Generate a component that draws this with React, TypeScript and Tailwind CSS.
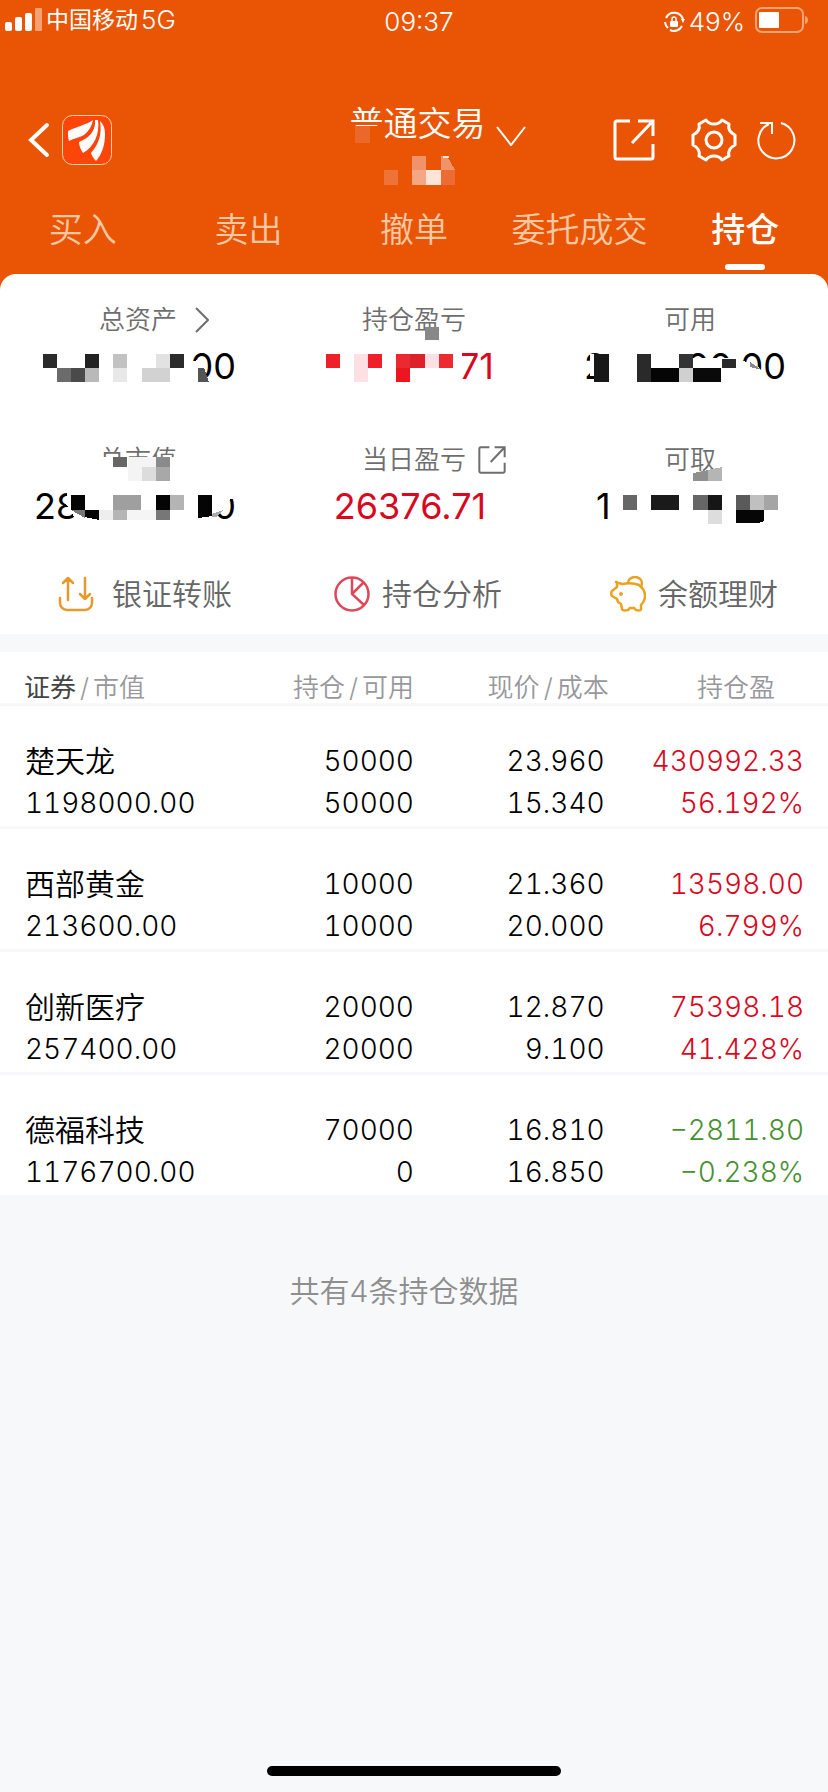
import clsx from "clsx";
import type { ReactNode } from "react";

type Block = { points: string; color: string };

const rect = (x: number, y: number, w: number, h: number, color: string): Block => ({
  points: `${x},${y} ${x + w},${y} ${x + w},${y + h} ${x},${y + h}`,
  color,
});

const poly = (points: string, color: string): Block => ({ points, color });

type Stat = {
  label: string;
  labelClass?: string;
  icon?: ReactNode;
  parts: string[];
  valueClass: string;
  blocks: Block[];
};

const ExportIcon = ({ className, width }: { className: string; width: number }) => (
  <svg viewBox="0 0 42 42" className={className} fill="none" stroke="currentColor" strokeWidth={width}>
    <path d="M17 2H4a2 2 0 0 0-2 2v34a2 2 0 0 0 2 2h34a2 2 0 0 0 2-2V25M25 2h15v15M39 3 19 24" />
  </svg>
);

const STATS: Stat[] = [
  {
    label: "总资产",
    labelClass: "pl-8 gap-[18px]",
    icon: (
      <svg viewBox="0 0 14 26" className="w-[14px] h-[26px]" fill="none" stroke="currentColor" strokeWidth="2">
        <path d="m1 1 12 12L1 25" />
      </svg>
    ),
    parts: ["00"],
    valueClass: "justify-end pr-10",
    blocks: [
      poly("188,64 198,62 204,70 209,84 209,88 188,88", "#fff"),
      poly("198,70 204,70 209,84 198,84", "#555"),
      rect(43, 56, 14, 14, "#2b2b2b"),
      rect(85, 56, 14, 14, "#222"),
      rect(57, 70, 14, 14, "#6b6b6b"),
      rect(71, 70, 14, 14, "#4a4a4a"),
      rect(85, 70, 14, 14, "#b9b9b9"),
      rect(113, 56, 14, 14, "#c2c2c2"),
      rect(113, 70, 14, 14, "#e8e8e8"),
      rect(142, 70, 28, 14, "#d2d2d2"),
      rect(156, 56, 14, 14, "#e2e2e2"),
      rect(170, 56, 14, 14, "#2b2b2b"),
    ],
  },
  {
    label: "持仓盈亏",
    parts: ["71"],
    valueClass: "justify-end pr-[58px] text-[#d8081f]",
    blocks: [
      rect(149, 29, 14, 13, "#888"),
      poly("176,52 186,52 186,72 183,88 176,88", "#fff"),
      rect(50, 56, 14, 14, "#f0202b"),
      rect(78, 56, 14, 28, "#fde0e4"),
      rect(92, 56, 14, 14, "#f0202b"),
      rect(120, 56, 14, 14, "#ec2831"),
      rect(134, 56, 15, 14, "#dd2029"),
      rect(120, 70, 14, 14, "#ee1420"),
      rect(149, 56, 14, 14, "#fde0e4"),
      rect(163, 56, 14, 14, "#ee2a30"),
    ],
  },
  {
    label: "可用",
    parts: ["2", "00.00"],
    valueClass: "justify-between pl-8 pr-[42px]",
    blocks: [
      rect(38, 56, 8, 22, "#fff"),
      rect(130, 60, 56, 28, "#fff"),
      rect(180, 70, 9, 18, "#fff"),
      poly("186,63 200,64 211,73 211,88 186,88", "#fff"),
      poly("198,64 210,72 198,69", "#888"),
      rect(42, 56, 15, 28, "#181818"),
      rect(85, 56, 14, 28, "#2a2a2a"),
      rect(99, 70, 28, 14, "#050505"),
      rect(127, 56, 14, 14, "#333"),
      rect(127, 70, 14, 14, "#d0d0d0"),
      rect(141, 70, 28, 14, "#0a0a0a"),
      rect(170, 61, 14, 9, "#2a2a2a"),
    ],
  },
  {
    label: "总市值",
    parts: ["28", "0"],
    valueClass: "justify-between pl-[34px] pr-10",
    blocks: [
      rect(96, 19, 82, 20, "#fff"),
      rect(113, 19, 14, 10, "#666"),
      rect(128, 19, 28, 10, "#f4f4f4"),
      rect(128, 29, 14, 14, "#f4f4f4"),
      rect(142, 29, 14, 14, "#dcdcdc"),
      rect(156, 19, 14, 10, "#8a8a8a"),
      rect(156, 29, 14, 14, "#a8a8a8"),
      poly("67,50 90,50 90,84 76,84 71,72 66,66", "#fff"),
      poly("208,48 238,48 234,60 229,62 228,72 220,75 208,84", "#fff"),
      rect(71, 57, 14, 15, "#050505"),
      poly("71,72 85,72 85,80", "#777"),
      poly("85,72 99,72 99,82 85,79", "#050505"),
      rect(99, 72, 14, 10, "#eee"),
      rect(113, 57, 28, 15, "#9f9f9f"),
      rect(113, 72, 14, 10, "#b5b5b5"),
      rect(127, 72, 29, 10, "#f5f5f5"),
      rect(156, 57, 14, 15, "#050505"),
      rect(156, 72, 14, 10, "#777"),
      rect(170, 57, 14, 15, "#b4b4b4"),
      poly("198,57 212,57 212,78 198,80", "#050505"),
      poly("212,76 223,72 217,79 212,79", "#aaa"),
    ],
  },
  {
    label: "当日盈亏",
    labelClass: "pl-10 gap-3",
    icon: <ExportIcon className="size-7" width={3} />,
    parts: ["26376.71"],
    valueClass: "justify-center pr-2 text-[#d8081f]",
    blocks: [],
  },
  {
    label: "可取",
    parts: ["1"],
    valueClass: "pl-[44px]",
    blocks: [
      poly("141,35 156,32 156,43 141,43", "#8f8f8f"),
      poly("156,32 170,29 170,43 156,43", "#b5b5b5"),
      rect(71, 57, 14, 15, "#666"),
      rect(99, 57, 28, 15, "#1a1a1a"),
      rect(141, 57, 15, 15, "#666"),
      rect(156, 57, 14, 15, "#161616"),
      rect(156, 72, 14, 14, "#ddd"),
      rect(184, 57, 14, 15, "#5a5a5a"),
      rect(198, 57, 14, 15, "#c0c0c0"),
      rect(212, 57, 14, 15, "#a5a5a5"),
      poly("184,72 212,72 212,83 206,85 184,85", "#060606"),
    ],
  },
];

const TITLE_BLOCKS: Block[] = [
  rect(5, 25, 25, 15, "#e95504"),
  rect(5, 25, 15, 17, "#ec682a"),
  rect(34, 69, 14, 15, "#ee7338"),
  rect(62, 55, 14, 14, "#f0936b"),
  rect(62, 69, 14, 15, "#f4a685"),
  rect(76, 69, 15, 15, "#fde3d8"),
  poly("91,55 97,55 105,69 91,69", "#f1926a"),
  rect(93, 55, 6, 2, "#fde3d8"),
  poly("91,69 105,69 105,84 91,84", "#ed6c33"),
];

const TABS = ["买入", "卖出", "撤单", "委托成交", "持仓"];

const HOLDINGS = [
  { name: "楚天龙", value: "1198000.00", held: "50000", free: "50000", price: "23.960", cost: "15.340", profit: "430992.33", rate: "56.192%" },
  { name: "西部黄金", value: "213600.00", held: "10000", free: "10000", price: "21.360", cost: "20.000", profit: "13598.00", rate: "6.799%" },
  { name: "创新医疗", value: "257400.00", held: "20000", free: "20000", price: "12.870", cost: "9.100", profit: "75398.18", rate: "41.428%" },
  { name: "德福科技", value: "1176700.00", held: "70000", free: "0", price: "16.810", cost: "16.850", profit: "−2811.80", rate: "−0.238%" },
];

const ACTIONS = [
  {
    title: "银证转账",
    gap: "gap-[18px] pl-[14px]",
    icon: (
      <svg viewBox="0 0 36 36" className="size-9" fill="none" stroke="#e8992b" strokeWidth="2.5" strokeLinecap="round" strokeLinejoin="round">
        <path d="M2 22v5a7 7 0 0 0 7 7h18a7 7 0 0 0 7-7v-5" />
        <path d="M10 24V2M5 7l5-5 5 5M27 2v21M22 18l5 5 5-5" />
      </svg>
    ),
  },
  {
    title: "持仓分析",
    gap: "gap-3 pl-2",
    icon: (
      <svg viewBox="0 0 36 36" className="size-9" fill="none" stroke="#e0475a" strokeWidth="2.5">
        <circle cx="18" cy="18" r="16.5" />
        <path d="M18 1v17l12 11M18 18 30 6" />
      </svg>
    ),
  },
  {
    title: "余额理财",
    gap: "gap-3 pl-2",
    icon: (
      <svg viewBox="0 0 36 36" className="size-9" fill="none" stroke="#eaa21f" strokeWidth="2.5" strokeLinecap="round" strokeLinejoin="round">
        <path d="M6 6 12 8C18 7 24 7 29 9c4 3 6 6 6 11 0 4-2 7-4 9v4c0 2-5 2-6 0l-1-1h-4l-1 1c-1 2-7 2-7 0l-1-5-3-2-1-3-5-3c-1-1-1-4 0-5l5-4V6Z" />
        <path d="M18 7c0-3 3-6 7-6s7 3 7 6l-1 4" />
        <circle cx="11" cy="18" r="0.8" fill="#eaa21f" />
      </svg>
    ),
  },
];

const Mosaic = ({ blocks, className }: { blocks: Block[]; className: string }) => (
  <svg className={clsx("absolute pointer-events-none", className)} shapeRendering="crispEdges" aria-hidden="true">
    {blocks.map((block, i) => (
      <polygon key={i} points={block.points} fill={block.color} />
    ))}
  </svg>
);

const Slash = () => <span className="px-1">/</span>;

const StatusBar = () => (
  <div className="grid grid-cols-[1fr_auto_1fr] items-center h-11 pl-[5px] pr-[19px] text-[26px] leading-[44px]">
    <div className="flex items-center gap-[3px] -mt-1">
      <svg viewBox="0 0 38 24" className="w-[38px] h-6" fill="#fff">
        <rect y="14" width="7" height="9" rx="2" />
        <rect x="10" y="9" width="7" height="14" rx="2" />
        <rect x="20" y="5" width="7" height="18" rx="2" />
        <rect x="30" width="7" height="23" rx="1" opacity="0.45" />
      </svg>
      <span className="text-[23px] font-normal">中国移动</span>
      <span>5G</span>
    </div>
    <span className="pl-6">09:37</span>
    <div className="flex items-center justify-end">
      <svg viewBox="0 0 22 22" className="size-[22px]" fill="none" stroke="#fff" strokeWidth="2">
        <path d="M20 9A9 9 0 0 0 3 7M2 11a9 9 0 0 0 3 6M7 19a9 9 0 0 0 12-4" />
        <path d="m18 8 2 4 2-4Z" fill="#fff" stroke="none" />
        <rect x="7" y="10" width="8" height="6" rx="1" fill="#fff" stroke="none" />
        <path d="M9 11V8a2 2 0 0 1 4 0v3" strokeWidth="1.5" />
      </svg>
      <span className="pl-1 pr-[10px]">49%</span>
      <svg viewBox="0 0 54 26" className="w-[54px] h-[26px] -mt-1" fill="none">
        <rect x="1" y="1" width="47" height="24" rx="6" stroke="#f7a577" strokeWidth="2" />
        <rect x="4" y="5" width="20" height="16" rx="1" fill="#fff" />
        <path d="M50 9c4 1 4 7 0 8Z" fill="#f7a577" />
      </svg>
    </div>
  </div>
);

const TitleBar = () => (
  <div className="grid grid-cols-[1fr_auto_1fr] items-start h-[146px] pt-[57px] pl-7 pr-[31px]">
    <div className="flex items-center gap-3 pt-[14px]">
      <button aria-label="返回">
        <svg viewBox="0 0 22 36" className="w-[22px] h-9" fill="none" stroke="#fff" strokeWidth="4" strokeLinecap="round">
          <path d="M19 3 3 18l16 15" />
        </svg>
      </button>
      <svg viewBox="0 0 50 50" className="size-[50px]">
        <rect x="0.5" y="0.5" width="49" height="49" rx="10" fill="#fb4509" stroke="#fbd3a8" />
        <g fill="#fff">
          <path d="M31 5C24 10 16 11 6 16c0 4 0 7 1 10 5-3 10-3 15-6 5-4 8-9 9-15Z" />
          <path d="M33 5c1 11-6 18-16 22 0 4 2 8 4 11C32 32 38 19 36 5Z" />
          <path d="M38 6c4 4 5 8 5 13 0 11-3 20-9 27-2-2-4-5-5-8 8-9 11-19 9-32Z" />
        </g>
      </svg>
    </div>
    <button className="relative flex items-start gap-[10px] h-[84px] pl-[50px]">
      <span className="text-[34px] leading-[46px]">普通交易</span>
      <svg viewBox="0 0 30 20" className="w-[30px] h-5 mt-[25px]" fill="none" stroke="#fff" strokeWidth="2">
        <path d="m1 1 14 18L29 1" />
      </svg>
      <Mosaic blocks={TITLE_BLOCKS} className="top-0 left-[50px] w-[140px] h-[84px]" />
    </button>
    <div className="flex items-center justify-end pt-[17px]">
      <button aria-label="分享">
        <ExportIcon className="size-[42px]" width={3} />
      </button>
      <button aria-label="设置" className="ml-9">
        <svg viewBox="0 0 46 44" className="w-[46px] h-11" fill="none" stroke="#fff" strokeWidth="3" strokeLinejoin="round">
          <path d="M15 2c2 3 5 4 8 4s6-1 8-4l7 4c-1 4 0 8 6 11v10c-6 3-7 7-6 11l-7 4c-2-3-5-4-8-4s-6 1-8 4l-7-4c1-4 0-8-6-11V17c6-3 7-7 6-11Z" />
          <circle cx="23" cy="22" r="8" />
        </svg>
      </button>
      <button aria-label="刷新" className="ml-5">
        <svg viewBox="0 0 40 40" className="size-10" fill="none" stroke="#fff" strokeWidth="2">
          <path d="M24 3a18 18 0 1 1-12 1" />
          <path d="M3 3h12v11" />
        </svg>
      </button>
    </div>
  </div>
);

const StatCell = ({ stat }: { stat: Stat }) => (
  <div className="relative">
    <div className={clsx("flex items-center justify-center text-[26px] leading-[40px] text-[#6e6e6e]", stat.labelClass)}>
      <span>{stat.label}</span>
      {stat.icon}
    </div>
    <div className={clsx("flex text-[36px] leading-[52px] font-normal", stat.valueClass)}>
      {stat.parts.map((part) => (
        <span key={part}>{part}</span>
      ))}
    </div>
    {stat.blocks.length > 0 && <Mosaic blocks={stat.blocks} className="-top-[2px] left-0 w-[276px] h-[92px]" />}
  </div>
);

export default function App() {
  return (
    <div className="w-full min-h-screen flex flex-col bg-[#f7f8fa] font-['Inter','Noto_Sans_CJK_SC',sans-serif] font-[350] text-black">
      <header className="bg-[#e95504] text-white">
        <StatusBar />
        <TitleBar />
        <nav className="grid grid-cols-5 h-[84px]">
          {TABS.map((tab) => {
            const isActive = tab === "持仓";
            return (
              <button
                key={tab}
                className={clsx("flex flex-col items-center pt-[17px] text-[34px] leading-[46px]", {
                  "font-medium": isActive,
                  "text-[#fbc8a4]": !isActive,
                })}
              >
                {tab}
                {isActive && <span className="w-10 h-[6px] mt-[11px] rounded-full bg-white" />}
              </button>
            );
          })}
        </nav>
        <section className="bg-white text-black rounded-t-2xl pt-[26px] pb-[18px]">
          <div className="grid grid-cols-3 gap-y-12">
            {STATS.map((stat) => (
              <StatCell key={stat.label} stat={stat} />
            ))}
          </div>
          <div className="grid grid-cols-3 mt-10">
            {ACTIONS.map((action) => (
              <button
                key={action.title}
                className={clsx(
                  "flex items-center justify-center text-[30px] leading-[44px] text-[#666]",
                  action.gap
                )}
              >
                {action.icon}
                <span>{action.title}</span>
              </button>
            ))}
          </div>
        </section>
      </header>
      <main className="mt-[18px]">
        <table className="w-full table-fixed bg-white">
          <colgroup>
            <col className="w-[30%]" />
            <col className="w-[20%]" />
            <col className="w-[24%]" />
            <col className="w-[26%]" />
          </colgroup>
          <thead>
            <tr className="border-b-3 border-[#f8f8fa] text-[26px] leading-[30px] text-right text-[#98989c]">
              <th className="pt-[21px] pl-6 font-[350] text-left">
                <span className="font-normal text-[#444]">证券</span>
                <Slash />
                市值
              </th>
              <th className="pt-[21px] font-[350]">
                持仓
                <Slash />
                可用
              </th>
              <th className="pt-[21px] pr-1 font-[350]">
                现价
                <Slash />
                成本
              </th>
              <th className="pt-[21px] pr-[53px] font-[350]">持仓盈</th>
            </tr>
          </thead>
          <tbody>
            {HOLDINGS.map((item) => (
              <tr
                key={item.name}
                className="border-b-3 last:border-b-0 border-[#f8f8fa] text-[28px] leading-[42px] text-right tabular-nums"
              >
                <td className="pt-[34px] pb-[2px] pl-[25px] text-left">
                  <p className="text-[30px] leading-[42px]">{item.name}</p>
                  <p>{item.value}</p>
                </td>
                <td className="pt-[34px] pb-[2px]">
                  <p>{item.held}</p>
                  <p>{item.free}</p>
                </td>
                <td className="pt-[34px] pb-[2px] pr-2">
                  <p>{item.price}</p>
                  <p>{item.cost}</p>
                </td>
                <td
                  className={clsx(
                    "pt-[34px] pb-[2px] pr-6",
                    item.profit.startsWith("−") ? "text-[#45912f]" : "text-[#d8081f]"
                  )}
                >
                  <p>{item.profit}</p>
                  <p>{item.rate}</p>
                </td>
              </tr>
            ))}
          </tbody>
        </table>
        <p className="mt-[74px] pr-5 text-center text-[30px] leading-[44px] text-[#8e8e8e]">共有4条持仓数据</p>
      </main>
      <div className="w-[294px] h-[10px] mt-auto mx-auto mb-4 rounded-full bg-black" />
    </div>
  );
}
